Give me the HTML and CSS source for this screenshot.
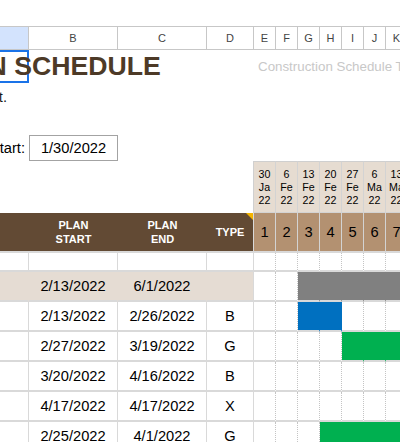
FILE: index.html
```html
<!DOCTYPE html>
<html>
<head>
<meta charset="utf-8">
<title>Construction Schedule</title>
<link rel="stylesheet" href="styles.css">
</head>
<body>
<div class="viewport">
  <div class="sheet">
    <div class="ch ch-sel">A</div>
    <div class="ch">B</div>
    <div class="ch">C</div>
    <div class="ch">D</div>
    <div class="ch">E</div>
    <div class="ch">F</div>
    <div class="ch">G</div>
    <div class="ch">H</div>
    <div class="ch">I</div>
    <div class="ch">J</div>
    <div class="ch">K</div>
    <div class="ch">L</div>

    <div class="c-title">CONSTRUCTION SCHEDULE</div>
    <div class="c-note">Construction Schedule Template © 2022 by Vertex42.com</div>

    <div class="c-sub">Residential Construction Project.</div>

    <div class="c-gap"></div>

    <div class="c-label">Project Start:</div>
    <div class="c-input">1/30/2022</div>

    <div class="r5-left"></div>
    <div class="wk"><span>30</span><span>Ja</span><span>22</span></div>
    <div class="wk"><span>6</span><span>Fe</span><span>22</span></div>
    <div class="wk"><span>13</span><span>Fe</span><span>22</span></div>
    <div class="wk"><span>20</span><span>Fe</span><span>22</span></div>
    <div class="wk"><span>27</span><span>Fe</span><span>22</span></div>
    <div class="wk"><span>6</span><span>Ma</span><span>22</span></div>
    <div class="wk"><span>13</span><span>Ma</span><span>22</span></div>
    <div class="wk"><span>20</span><span>Ma</span><span>22</span></div>

    <div class="th"></div>
    <div class="th">PLAN<br>START</div>
    <div class="th">PLAN<br>END</div>
    <div class="th th-type">TYPE</div>
    <div class="wn">1</div>
    <div class="wn">2</div>
    <div class="wn">3</div>
    <div class="wn">4</div>
    <div class="wn">5</div>
    <div class="wn">6</div>
    <div class="wn">7</div>
    <div class="wn">8</div>

    <div class="cell"></div>
    <div class="cell"></div>
    <div class="cell"></div>
    <div class="cell"></div>
    <div class="g"></div><div class="g"></div><div class="g"></div><div class="g"></div>
    <div class="g"></div><div class="g"></div><div class="g"></div><div class="g"></div>

    <div class="cell sum"></div>
    <div class="cell sum">2/13/2022</div>
    <div class="cell sum">6/1/2022</div>
    <div class="cell sum sum-d"></div>
    <div class="g"></div><div class="g"></div><div class="g gray"></div><div class="g gray"></div>
    <div class="g gray"></div><div class="g gray"></div><div class="g gray"></div><div class="g gray"></div>

    <div class="cell"></div>
    <div class="cell">2/13/2022</div>
    <div class="cell">2/26/2022</div>
    <div class="cell">B</div>
    <div class="g"></div><div class="g"></div><div class="g blue"></div><div class="g blue"></div>
    <div class="g"></div><div class="g"></div><div class="g"></div><div class="g"></div>

    <div class="cell"></div>
    <div class="cell">2/27/2022</div>
    <div class="cell">3/19/2022</div>
    <div class="cell">G</div>
    <div class="g"></div><div class="g"></div><div class="g"></div><div class="g"></div>
    <div class="g green"></div><div class="g green"></div><div class="g green"></div><div class="g"></div>

    <div class="cell"></div>
    <div class="cell">3/20/2022</div>
    <div class="cell">4/16/2022</div>
    <div class="cell">B</div>
    <div class="g"></div><div class="g"></div><div class="g"></div><div class="g"></div>
    <div class="g"></div><div class="g"></div><div class="g"></div><div class="g blue"></div>

    <div class="cell"></div>
    <div class="cell">4/17/2022</div>
    <div class="cell">4/17/2022</div>
    <div class="cell">X</div>
    <div class="g"></div><div class="g"></div><div class="g"></div><div class="g"></div>
    <div class="g"></div><div class="g"></div><div class="g"></div><div class="g"></div>

    <div class="cell"></div>
    <div class="cell">2/25/2022</div>
    <div class="cell">4/1/2022</div>
    <div class="cell">G</div>
    <div class="g"></div><div class="g"></div><div class="g"></div><div class="g green"></div>
    <div class="g green"></div><div class="g green"></div><div class="g green"></div><div class="g green"></div>
  </div>
</div>
</body>
</html>
```

FILE: styles.css
```css
* {
  box-sizing: border-box;
}

html,
body {
  margin: 0;
  padding: 0;
  background: #ffffff;
}

.viewport {
  width: 400px;
  height: 442px;
  overflow: hidden;
  font-family: "Liberation Sans", Arial, sans-serif;
  color: #000000;
  background: #ffffff;
}

.sheet {
  display: grid;
  grid-template-columns: 240px 89px 89px 47px repeat(8, 22px);
  grid-template-rows: 24px 33px 25px 27px 26px 52px 40px 19px repeat(6, 30px);
  margin-left: -211px;
  margin-top: 26px;
}

/* column letter headers */
.ch {
  display: flex;
  align-items: center;
  justify-content: center;
  font-size: 11px;
  color: #444444;
  background: #ffffff;
  border-top: 1px solid #c7c7c7;
  border-bottom: 1px solid #c7c7c7;
  border-right: 1px solid #c7c7c7;
}

.ch-sel {
  background: #d3e3fd;
}

/* row 1 */
.c-title {
  grid-column: 1;
  display: flex;
  align-items: center;
  padding-left: 3px;
  font-size: 26.67px;
  font-weight: bold;
  color: #4d3a27;
  white-space: nowrap;
  box-shadow: inset 0 0 0 2px #1a73e8;
}

.c-note {
  grid-column: 5 / -1;
  display: flex;
  align-items: center;
  padding-left: 4px;
  font-size: 13.33px;
  color: #c8c8c8;
  white-space: nowrap;
}

/* row 2 */
.c-sub {
  grid-column: 1;
  display: flex;
  justify-content: flex-end;
  align-items: flex-end;
  padding: 0 22px 2px 0;
  font-size: 14.67px;
  line-height: 17px;
  color: #1a1a1a;
  white-space: nowrap;
  overflow: hidden;
}

/* row 3 */
.c-gap {
  grid-column: 1 / -1;
}

/* row 4 */
.c-label {
  grid-column: 1;
  display: flex;
  justify-content: flex-end;
  align-items: flex-end;
  padding: 0 4px 4px 0;
  font-size: 14.67px;
  line-height: 17px;
  white-space: nowrap;
}

.c-input {
  grid-column: 2;
  display: flex;
  align-items: center;
  justify-content: center;
  border: 1px solid #a3a3a3;
  font-size: 14.67px;
}

/* row 5: week dates */
.r5-left {
  grid-column: 1 / 5;
  border-right: 1px solid #d0d0d0;
}

.wk {
  display: flex;
  flex-direction: column;
  justify-content: center;
  align-items: center;
  background: #e6dcd1;
  border-top: 1px solid #cfcfcf;
  border-right: 1px solid #d3d3d3;
  border-bottom: 1px solid #d3d3d3;
  font-size: 10.67px;
  line-height: 13px;
  color: #000000;
  overflow: hidden;
  white-space: nowrap;
}

/* row 6: table header */
.th {
  display: flex;
  align-items: center;
  justify-content: center;
  text-align: center;
  background: #624a34;
  color: #ffffff;
  font-weight: bold;
  font-size: 11px;
  line-height: 14px;
  border-bottom: 2px solid #d9d9d9;
}

.th-type {
  position: relative;
  border-right: 1px solid #d9d9d9;
}

.th-type::after {
  content: "";
  position: absolute;
  top: 0;
  right: 0;
  border-style: solid;
  border-width: 0 7px 7px 0;
  border-color: transparent #f4b400 transparent transparent;
}

.wn {
  display: flex;
  align-items: center;
  justify-content: center;
  background: #b39171;
  border-right: 1px solid #d3d3d3;
  border-bottom: 2px solid #d9d9d9;
  font-size: 14.67px;
}

/* body cells */
.cell {
  display: flex;
  align-items: center;
  justify-content: center;
  border-right: 1px solid #d9d9d9;
  border-bottom: 2px solid #d9d9d9;
  font-size: 14.67px;
  white-space: nowrap;
}

.sum {
  background: #e5dcd3;
  border-right-color: #e5dcd3;
}

.sum-d {
  border-right-color: #d9d9d9;
}

.g {
  border-right: 1px dotted #c4c4c4;
  border-bottom: 2px solid #d9d9d9;
}

.gray {
  background: #808080;
  border-right-color: #808080;
}

.blue {
  background: #0070c0;
  border-right-color: #0070c0;
}

.green {
  background: #00b050;
  border-right-color: #00b050;
}
```
